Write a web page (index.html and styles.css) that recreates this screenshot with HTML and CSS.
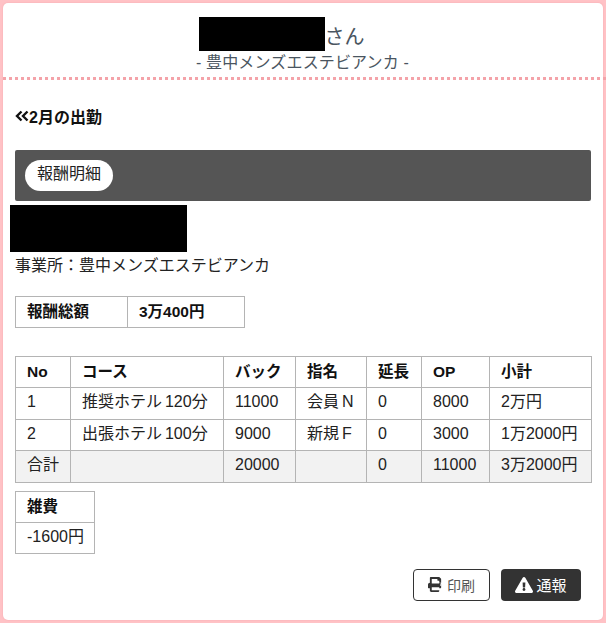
FILE: index.html
```html
<!DOCTYPE html>
<html lang="ja">
<head>
<meta charset="utf-8">
<title>報酬明細</title>
<link rel="stylesheet" href="styles.css">
</head>
<body>
<div class="page">
  <div class="card">
    <header class="head">
      <div class="name"><span class="redact-name"></span><span>さん</span></div>
      <div class="shop">- 豊中メンズエステビアンカ -</div>
    </header>
    <main class="content">
      <a class="back"><svg class="back-icon" viewBox="0 0 14 12"><path d="M6.500 1.500 2 6l4.500 4.500M12.500 1.500 8 6l4.500 4.500"/></svg>2月の出勤</a>
      <div class="tabbar"><span class="pill">報酬明細</span></div>
      <div class="redact-person"></div>
      <p class="office">事業所：豊中メンズエステビアンカ</p>
      <table class="tbl total">
        <tr><th class="t1">報酬総額</th><th class="t2">3万400円</th></tr>
      </table>
      <table class="tbl detail">
        <colgroup><col class="c1"><col class="c2"><col class="c3"><col class="c4"><col class="c5"><col class="c6"><col class="c7"></colgroup>
        <tr><th>No</th><th>コース</th><th>バック</th><th>指名</th><th>延長</th><th>OP</th><th>小計</th></tr>
        <tr class="tall"><td>1</td><td>推奨ホテル 120分</td><td>11000</td><td>会員 N</td><td>0</td><td>8000</td><td>2万円</td></tr>
        <tr><td>2</td><td>出張ホテル 100分</td><td>9000</td><td>新規 F</td><td>0</td><td>3000</td><td>1万2000円</td></tr>
        <tr class="sum tall"><td>合計</td><td></td><td>20000</td><td></td><td>0</td><td>11000</td><td>3万2000円</td></tr>
      </table>
      <table class="tbl misc">
        <tr><th>雑費</th></tr>
        <tr><td>-1600円</td></tr>
      </table>
      <div class="actions">
        <a class="btn btn-print"><svg class="ico" viewBox="0 0 512 512"><path d="M448 192V77.250c0-8.490-3.370-16.620-9.370-22.630L393.370 9.370c-6-6-14.140-9.370-22.630-9.370H96C78.330 0 64 14.330 64 32v160c-35.350 0-64 28.650-64 64v112c0 8.840 7.160 16 16 16h48v96c0 17.670 14.330 32 32 32h256c17.670 0 32-14.330 32-32v-96h48c8.840 0 16-7.160 16-16V256c0-35.350-28.650-64-64-64zm-64 256H128v-96h256v96zm0-224H128V64h192v48c0 8.840 7.160 16 16 16h48v96zm48 72c-13.250 0-24-10.750-24-24 0-13.260 10.750-24 24-24s24 10.740 24 24c0 13.250-10.750 24-24 24z"/></svg>印刷</a>
        <a class="btn btn-report"><svg class="ico ico-warn" viewBox="0 0 576 512"><path d="M569.517 440.013C587.975 472.007 564.806 512 527.940 512H48.054c-36.937 0-59.999-40.055-41.577-71.987L246.423 23.985c18.467-32.009 64.720-31.951 83.154 0l239.940 416.028zM288 354c-25.405 0-46 20.595-46 46s20.595 46 46 46 46-20.595 46-46-20.595-46-46-46zm-43.673-165.346l7.418 136c.347 6.364 5.609 11.346 11.982 11.346h48.546c6.373 0 11.635-4.982 11.982-11.346l7.418-136c.375-6.874-5.098-12.654-11.982-12.654h-63.383c-6.884 0-12.356 5.780-11.981 12.654z"/></svg>通報</a>
      </div>
    </main>
  </div>
</div>
</body>
</html>
```
FILE: styles.css
```css
* { box-sizing: border-box; }
html, body { margin: 0; height: 100%; background: #fff; }
body {
  font-family: "Liberation Sans", "Noto Sans CJK JP", sans-serif;
  font-size: 16px;
  color: #222;
}
.page {
  width: 606px;
  height: 623px;
  padding: 3px;
  background: #ffc2c6;
  overflow: hidden;
}
.card {
  height: 617px;
  background: #fff;
  border-radius: 5px;
  box-shadow: 0 0 2px #f3a9ae;
}
.head {
  height: 77px;
  padding-top: 14px;
  margin-right: -3px;
  border-bottom: 3px dotted #f4a3a9;
  text-align: center;
  color: #4a5560;
}
.name {
  display: flex;
  justify-content: center;
  align-items: flex-end;
  height: 34px;
  font-size: 20px;
  line-height: 28px;
  padding-right: 46px;
}
.redact-name { width: 126px; height: 34px; background: #000; }
.shop { font-size: 16px; line-height: 24px; letter-spacing: .15px; padding-right: 4px; }
.content { padding: 0 12px; }
.back {
  display: flex;
  align-items: center;
  height: 24px;
  margin-top: 24px;
  font-weight: 700;
  font-size: 16px;
  color: #111;
}
.back-icon { width: 14px; height: 12px; fill: none; stroke: #111; stroke-width: 2.400; }
.tabbar {
  display: flex;
  align-items: center;
  height: 51px;
  margin-top: 22px;
  padding-left: 10px;
  background: #555;
  border-radius: 2px;
}
.pill {
  display: block;
  width: 88px;
  height: 31px;
  border-radius: 16px;
  background: #fff;
  text-align: center;
  line-height: 27px;
  color: #222;
}
.redact-person { width: 177px; height: 47px; margin: 4px 0 0 -5px; background: #000; }
.office { margin: 3px 0 0; line-height: 22px; color: #222; }
.tbl { border-collapse: collapse; }
.tbl th, .tbl td {
  height: 31px;
  padding: 0 0 3px 11px;
  border: 1px solid #b4b4b4;
  text-align: left;
  line-height: 22px;
  white-space: nowrap;
  word-spacing: -1.500px;
  color: #222;
}
.tbl th { padding-bottom: 0; font-weight: 700; color: #111; font-size: 15.500px; }
.total { margin-top: 19px; width: 230px; table-layout: fixed; }
.t1 { width: 112px; }
.detail { margin-top: 28px; width: 576px; table-layout: fixed; }
.c1 { width: 55px; } .c2 { width: 153px; } .c3 { width: 72px; } .c4 { width: 71px; }
.c5 { width: 55px; } .c6 { width: 68px; } .c7 { width: 102px; }
.detail .tall td { height: 32px; }
.sum td { background: #f2f2f2; }
.misc { margin-top: 8px; width: 80px; table-layout: fixed; }
.actions { display: flex; justify-content: flex-end; gap: 11px; margin-top: 15px; padding-right: 10px; }
.btn {
  display: flex;
  align-items: center;
  justify-content: center;
  gap: 4px;
  height: 32px;
  border-radius: 4px;
  font-size: 15px;
  padding-bottom: 1px;
}
.btn-print { width: 77px; border: 1px solid #333; background: #fff; color: #555; font-size: 14px; }
.btn-report { width: 80px; background: #333; color: #fff; gap: 3px; }
.ico { width: 15px; height: 15px; fill: #333; }
.ico-warn { width: 18px; height: 16px; fill: #fff; }
```
